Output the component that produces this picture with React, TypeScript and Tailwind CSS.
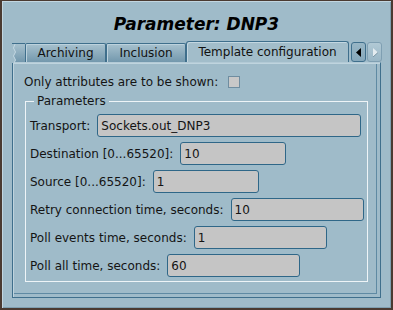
import React from "react";

function Field({ label, value, w }: { label: string; value: string; w: string }) {
  return (
    <div className="flex items-center gap-[7px] h-[23px]">
      <span className="whitespace-nowrap">{label}</span>
      <div
        className={`${w} h-[23px] bg-[#c5c5c5] border border-[#2f6788] rounded-[3px] pl-[3px] flex items-center text-[#141414]`}
      >
        {value}
      </div>
    </div>
  );
}

function InactiveTab({ label, w }: { label: string; w: string }) {
  return (
    <div
      className={`${w} h-[19px] border border-b-0 border-[#3f6f8c] bg-gradient-to-b from-[#a7c1ce] to-[#7398ad] shadow-[inset_1px_1px_0_#bcd2dd] flex items-center justify-center text-[#111] rounded-t-[2px]`}
    >
      {label}
    </div>
  );
}

export default function App() {
  return (
    <div className="w-[393px] h-[310px] bg-[#9fbbc9] border-l-2 border-t border-r-2 border-b-2 border-[#4a3a31] shadow-[inset_1px_1px_0_#c2d6e0,inset_-1px_-1px_0_#7f9fb0] font-['DejaVu_Sans',sans-serif] text-[12px] text-[#141414] flex flex-col">
      <div className="pt-[11px] h-[35px] leading-[24px] text-center text-[17px] font-bold italic text-black">
        Parameter: DNP3
      </div>
      <div className="mt-[5px] pl-[10px] flex items-end h-[21px]">
        {/* partial scrolled tab */}
        <div className="w-[13px] h-[19px] relative bg-gradient-to-b from-[#a7c1ce] to-[#7398ad] border-t border-[#3f6f8c]">
          <svg width="13" height="19" viewBox="0 0 13 19" className="block">
            <path d="M0 0 H3 L1.5 4 L3.5 8 L1.5 12 L3.5 16 L2 19 H0 Z" fill="#9fbbc9" />
            <path d="M3 0 L1.5 4 L3.5 8 L1.5 12 L3.5 16 L2 19" fill="none" stroke="#c4d8e2" strokeWidth="1" />
          </svg>
        </div>
        <InactiveTab label="Archiving" w="w-[81px]" />
        <InactiveTab label="Inclusion" w="w-[80px]" />
        <div className="w-[163px] h-[21px] border border-b-0 border-[#3f6f8c] rounded-t-[3px] bg-[#a2bdca] shadow-[inset_1px_1px_0_#c3d7e1] flex items-center justify-center text-[#111]">
          Template configuration
        </div>
        <div className="ml-[2px] w-[15px] h-[20px] border border-[#3f6f8c] rounded-[3px] bg-gradient-to-b from-[#98b6c5] to-[#86a8bb] flex items-center justify-center">
          <svg width="6" height="9" viewBox="0 0 6 9">
            <path d="M5 0 V9 L0 4.5 Z" fill="#000" />
          </svg>
        </div>
        <div className="ml-[1px] w-[15px] h-[20px] border border-[#7f9fb2] rounded-[3px] bg-gradient-to-b from-[#b1c9d5] to-[#9ab7c6] flex items-center justify-center">
          <svg width="6" height="9" viewBox="0 0 6 9">
            <path d="M1 0 V9 L6 4.5 Z" fill="#e4ecf0" />
            <path d="M1 9 L6 4.5" stroke="#7d97a5" strokeWidth="1" />
          </svg>
        </div>
      </div>
      <div className="mx-[10px] h-[236px] border border-[#3f6f8c] border-t-[#b3cad6] shadow-[inset_1px_1px_0_#bfd4de,inset_-3px_-3px_0_#9fbbc9,inset_-4px_-4px_0_#5f8aa3] flex flex-col">
        <div className="mt-[11px] ml-[11px] h-[16px] flex items-center gap-[10px]">
          <span>Only attributes are to be shown:</span>
          <div className="w-[12px] h-[12px] bg-[#c8c8c8] border border-[#6f8da0]" />
        </div>
        <fieldset className="mt-[4px] mx-[12px] border border-[#eef4f7] pl-[4px] pb-[4px] flex flex-col gap-[5px]">
          <legend className="ml-[4px] px-[3px] leading-[15px]">Parameters</legend>
          <div className="h-0" />
          <Field label="Transport:" value="Sockets.out_DNP3" w="w-[264px]" />
          <Field label="Destination [0...65520]:" value="10" w="w-[106px]" />
          <Field label="Source [0...65520]:" value="1" w="w-[106px]" />
          <Field label="Retry connection time, seconds:" value="10" w="w-[133px]" />
          <Field label="Poll events time, seconds:" value="1" w="w-[133px]" />
          <Field label="Poll all time, seconds:" value="60" w="w-[133px]" />
        </fieldset>
      </div>
    </div>
  );
}
